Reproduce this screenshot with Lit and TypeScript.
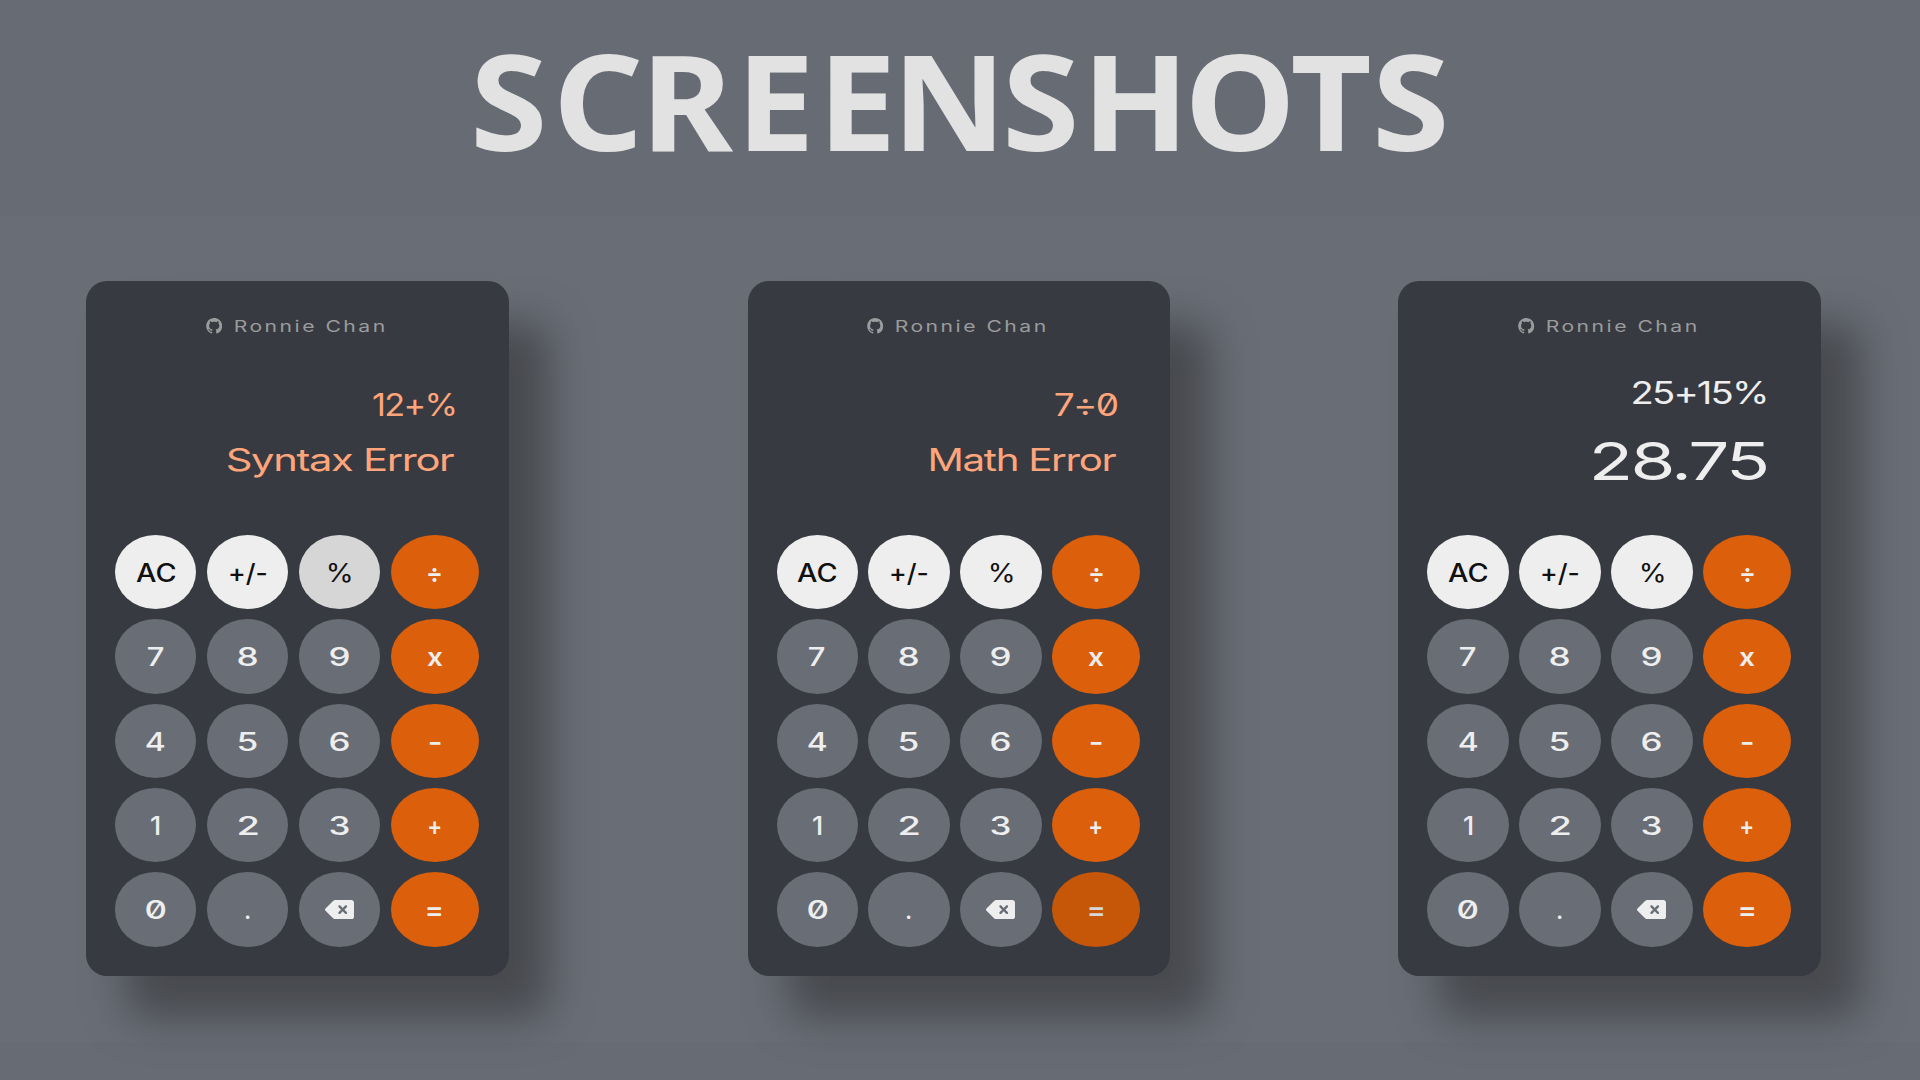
import { LitElement, html, css, svg } from "lit";
import { customElement, property } from "lit/decorators.js";

const FAMILY = 'Inter, "DejaVu Sans", sans-serif';
const pen = document.createElement("canvas").getContext("2d")!;

/**
 * A line of text stretched so that its visible ink is exactly `ink` pixels wide.
 * With `centers`, each letter is optically centred on its own offset instead.
 */
@customElement("wide-text")
class WideText extends LitElement {
  @property() text = "";
  @property({ type: Number }) size = 16;
  @property({ type: Number }) weight = 400;
  @property({ type: Number }) ink = 10;
  @property({ type: Number }) spacing = 0;
  @property() family = FAMILY;
  @property({ attribute: false }) centers: number[] = [];

  static styles = css`
    :host { display: block; line-height: 0; }
    svg { display: block; overflow: visible; }
    text { fill: currentColor; font-feature-settings: "zero" 1; white-space: pre; }
  `;

  render() {
    pen.font = `${this.weight} ${this.size}px ${this.family}`;
    const m = pen.measureText(this.text);
    const natural = m.actualBoundingBoxLeft + m.actualBoundingBoxRight + this.spacing * (this.text.length - 1);
    const scale = this.centers.length ? 1.055 : this.ink / natural;
    const x = this.centers.length
      ? this.centers.map((c, i) => {
          const g = pen.measureText(this.text[i]);
          return (c / scale - (g.actualBoundingBoxRight - g.actualBoundingBoxLeft) / 2).toFixed(2);
        }).join(" ")
      : m.actualBoundingBoxLeft;
    const height = this.size * 0.727;
    return html`<svg width=${this.ink} height=${height}>
      ${svg`<text transform="scale(${scale} 1)" x=${x} y=${height}
        font-family=${this.family} font-size=${this.size} font-weight=${this.weight}
        letter-spacing=${this.spacing}>${this.text}</text>`}
    </svg>`;
  }
}

type Key = { label: string; ink: number; kind: "light" | "num" | "op"; weight?: number };
const KEYS: Key[] = [
  { label: "AC", ink: 40, kind: "light", weight: 450 },
  { label: "+/-", ink: 36, kind: "light" },
  { label: "%", ink: 22.6, kind: "light", weight: 400 },
  { label: "÷", ink: 13, kind: "op" },
  { label: "7", ink: 16, kind: "num" },
  { label: "8", ink: 19.6, kind: "num" },
  { label: "9", ink: 19.4, kind: "num" },
  { label: "x", ink: 15.6, kind: "op" },
  { label: "4", ink: 19, kind: "num" },
  { label: "5", ink: 19.6, kind: "num" },
  { label: "6", ink: 19.4, kind: "num" },
  { label: "-", ink: 11.4, kind: "op" },
  { label: "1", ink: 8.6, kind: "num" },
  { label: "2", ink: 19.6, kind: "num" },
  { label: "3", ink: 19.4, kind: "num" },
  { label: "+", ink: 11.4, kind: "op" },
  { label: "0", ink: 19.4, kind: "num" },
  { label: ".", ink: 3.8, kind: "num" },
  { label: "del", ink: 29, kind: "num" },
  { label: "=", ink: 14.6, kind: "op" },
];

type Line = { text: string; ink: number; size: number; weight: number; spacing?: number };

@customElement("calc-card")
class CalcCard extends LitElement {
  @property({ attribute: false }) lines: Line[] = [];
  @property() pressed = "";
  @property({ type: Boolean, reflect: true }) error = false;

  static styles = css`
    :host {
      display: flex; flex-direction: column; box-sizing: border-box;
      width: 422.5px; height: 695px; padding: 36.5px 29.5px 29px 29px;
      border-radius: 21px; background: #383a41; color: #eee;
      box-shadow: 40px 42px 42px #484a4e;
    }
    .author { display: flex; justify-content: center; gap: 12.5px; height: 16px; color: #9b9c9d; padding-right: 3.8px; }
    .author svg { display: block; width: 16.4px; height: 16px; }
    .author wide-text { margin-top: 2.6px; }
    .display {
      display: flex; flex-direction: column; align-items: flex-end; gap: 38.7px;
      height: 201.5px; box-sizing: border-box; padding: 47px 25.8px 0 0;
    }
    :host([error]) .display { color: #ffa57b; padding-top: 59.2px; gap: 32.2px; padding-right: 24px; }
    .keys { display: grid; grid-template-columns: 81.4px 81.4px 81.4px 88px; grid-auto-rows: 74.3px; gap: 10.05px 10.5px; }
    .key { display: flex; justify-content: center; padding-top: 28.9px; box-sizing: border-box; border-radius: 50%; background: #696d76; }
    .light { background: #eee; color: #111; }
    .op { background: #dc5f0b; }
    .pressed.light { background: #d6d6d6; }
    .pressed.op { background: #c65608; color: #d6d6d6; }
    .del { width: 29px; height: 19.3px; display: block; margin-top: -1.4px; }
  `;

  render() {
    return html`
      <div class="author">
        <svg viewBox="0 0 16 16" fill="currentColor"><path d="M8 0C3.58 0 0 3.58 0 8c0 3.54 2.29 6.53 5.47 7.59.4.07.55-.17.55-.38 0-.19-.01-.82-.01-1.49-2.01.37-2.53-.49-2.69-.94-.09-.23-.48-.94-.82-1.13-.28-.15-.68-.52-.01-.53.63-.01 1.08.58 1.23.82.72 1.21 1.87.87 2.33.66.07-.52.28-.87.51-1.07-1.78-.2-3.64-.89-3.64-3.95 0-.87.31-1.59.82-2.15-.08-.2-.36-1.02.08-2.12 0 0 .67-.21 2.2.82.64-.18 1.32-.27 2-.27s1.36.09 2 .27c1.53-1.04 2.2-.82 2.2-.82.44 1.1.16 1.92.08 2.12.51.56.82 1.27.82 2.15 0 3.07-1.87 3.75-3.65 3.95.29.25.54.73.54 1.48 0 1.07-.01 1.93-.01 2.2 0 .21.15.46.55.38A8.01 8.01 0 0 0 16 8c0-4.42-3.58-8-8-8z"/></svg>
        <wide-text text="Ronnie Chan" size="16" weight="400" ink="149.5" spacing="1.9"></wide-text>
      </div>
      <div class="display">
        ${this.lines.map(l => html`<wide-text .text=${l.text} .ink=${l.ink} .size=${l.size} .weight=${l.weight} .spacing=${l.spacing ?? 0}></wide-text>`)}
      </div>
      <div class="keys">
        ${KEYS.map(k => html`<div class="key ${k.kind} ${k.label === this.pressed ? "pressed" : ""}">
          ${k.label === "del"
            ? html`<svg class="del" viewBox="0 64 576 384" fill="currentColor"><path d="M576 116c0-28-24-52-52-52H205.3c-17 0-33.3 6.7-45.3 18.7L9.4 233.4c-6 6-9.4 14.1-9.4 22.6s3.4 16.6 9.4 22.6L160 429.3c12 12 28.3 18.7 45.3 18.7H524c28 0 52-24 52-52V116zM271 175c9.4-9.4 24.6-9.4 33.9 0l47 47 47-47c9.4-9.4 24.6-9.4 33.9 0s9.4 24.6 0 33.9l-47 47 47 47c9.4 9.4 9.4 24.6 0 33.9s-24.6 9.4-33.9 0l-47-47-47 47c-9.4 9.4-24.6 9.4-33.9 0s-9.4-24.6 0-33.9l47-47-47-47c-9.4-9.4-9.4-24.6 0-33.9z"/></svg>`
            : html`<wide-text .text=${k.label} .ink=${k.ink} .size=${25.2} .weight=${k.weight ?? (k.kind === "op" ? 600 : 500)}></wide-text>`}
        </div>`)}
      </div>`;
  }
}

const TITLE_CENTERS = [36.5, 127, 220, 304.7, 386.5, 476.5, 568.5, 662.5, 767, 858, 938.5];

@customElement("app-root")
class AppRoot extends LitElement {
  static styles = css`
    :host { display: flex; flex-direction: column; width: 1920px; height: 1080px; overflow: hidden; background: #676b74; }
    .title { display: flex; justify-content: center; box-sizing: border-box; height: 216px; padding-top: 54.4px; color: #e2e2e2; }
    .stage { display: flex; box-sizing: border-box; height: 826px; padding: 65px 0 0 86px; background: #696d76; }
    .second { margin-left: 239px; }
    .third { margin-left: 228.4px; }
  `;

  render() {
    return html`
      <div class="title">
        <wide-text text="SCREENSHOTS" family="'Noto Sans', 'Open Sans', sans-serif" size="133.3" weight="660" ink="975" .centers=${TITLE_CENTERS}></wide-text>
      </div>
      <div class="stage">
        <calc-card error pressed="%" .lines=${[
          { text: "12+%", ink: 82, size: 31.4, weight: 400, spacing: -1.5 },
          { text: "Syntax Error", ink: 228, size: 31.4, weight: 400, spacing: -1 },
        ]}></calc-card>
        <calc-card class="second" error pressed="=" .lines=${[
          { text: "7÷0", ink: 62, size: 31.4, weight: 400, spacing: -1.5 },
          { text: "Math Error", ink: 187, size: 31.4, weight: 400, spacing: -1 },
        ]}></calc-card>
        <calc-card class="third" .lines=${[
          { text: "25+15%", ink: 133, size: 31.4, weight: 400, spacing: -1.5 },
          { text: "28.75", ink: 173, size: 52.6, weight: 400, spacing: -2 },
        ]}></calc-card>
      </div>`;
  }
}
